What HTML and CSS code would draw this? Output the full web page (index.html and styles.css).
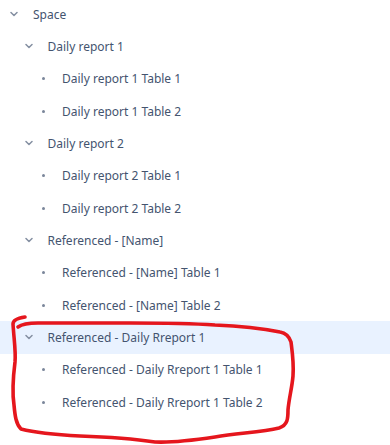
FILE: index.html
```html
<!DOCTYPE html>
<html lang="en">
<head>
<meta charset="UTF-8">
<title>Space tree</title>
<link rel="stylesheet" href="styles.css">
</head>
<body>

<!-- TREE -->
<ul class="tree">
 <li class="row lvl0"><span class="icon chev"><svg width="8" height="6" viewBox="0 0 8 6"><path d="M1 1.5 L4 4.5 L7 1.5" /></svg></span><span class="label">Space</span></li>

 <li class="row lvl1"><span class="icon chev"><svg width="8" height="6" viewBox="0 0 8 6"><path d="M1 1.5 L4 4.5 L7 1.5" /></svg></span><span class="label">Daily report 1</span></li>
 <li class="row lvl2"><span class="icon"><i class="dot"></i></span><span class="label">Daily report 1 Table 1</span></li>
 <li class="row lvl2"><span class="icon"><i class="dot"></i></span><span class="label">Daily report 1 Table 2</span></li>

 <li class="row lvl1"><span class="icon chev"><svg width="8" height="6" viewBox="0 0 8 6"><path d="M1 1.5 L4 4.5 L7 1.5" /></svg></span><span class="label">Daily report 2</span></li>
 <li class="row lvl2"><span class="icon"><i class="dot"></i></span><span class="label">Daily report 2 Table 1</span></li>
 <li class="row lvl2"><span class="icon"><i class="dot"></i></span><span class="label">Daily report 2 Table 2</span></li>

 <li class="row lvl1"><span class="icon chev"><svg width="8" height="6" viewBox="0 0 8 6"><path d="M1 1.5 L4 4.5 L7 1.5" /></svg></span><span class="label">Referenced - [Name]</span></li>
 <li class="row lvl2"><span class="icon"><i class="dot"></i></span><span class="label">Referenced - [Name] Table 1</span></li>
 <li class="row lvl2"><span class="icon"><i class="dot"></i></span><span class="label">Referenced - [Name] Table 2</span></li>

 <li class="row lvl1 selected"><span class="icon chev"><svg width="8" height="6" viewBox="0 0 8 6"><path d="M1 1.5 L4 4.5 L7 1.5" /></svg></span><span class="label">Referenced - Daily Rreport 1</span></li>
 <li class="row lvl2"><span class="icon"><i class="dot"></i></span><span class="label">Referenced - Daily Rreport 1 Table 1</span></li>
 <li class="row lvl2"><span class="icon"><i class="dot"></i></span><span class="label">Referenced - Daily Rreport 1 Table 2</span></li>
</ul>

<!-- RED MARKER SCRIBBLE -->
<svg class="scribble" width="390" height="445" viewBox="0 0 390 445">
 <path d="M25 317 C18 318 13 320 13 324 C14 340 16 352 15 362 C13 378 12 392 14 405 C15 416 16 424 21 429 C40 434 60 435 80 436 C110 437 135 439 155 442 C175 443 195 440 215 437 C240 433 262 432 279 428 C288 425 288 418 288 410 C289 398 292 388 293 376 C294 362 292 350 291 342 C289 336 286 333 280 332 C260 328 240 326 215 325 C185 323 160 323 130 323 C95 323 60 323 38 323 C30 323 22 324 18 327" />
</svg>

</body>
</html>
```

FILE: styles.css
```css
body{
 margin:0;
 background:#fff;
 font-family:"Noto Sans", "Open Sans", Arial, sans-serif;
 overflow:hidden;
}

/* TREE */
.tree{
 list-style:none;
 margin:-2px 0 0 0;
 padding:0;
}

.row{
 display:flex;
 align-items:center;
 height:32.33px;
 font-size:12px;
 color:#44546f;
}

.lvl0{padding-left:6px;}
.lvl1{padding-left:20.5px;}
.lvl2{padding-left:35px;}

.row.selected{
 background:#e9f2ff;
}

.icon{
 width:16px;
 height:16px;
 margin-right:11px;
 display:flex;
 align-items:center;
 justify-content:center;
 flex-shrink:0;
}

.chev svg path{
 fill:none;
 stroke:#8590a2;
 stroke-width:1.5;
 stroke-linecap:round;
 stroke-linejoin:round;
}

.dot{
 display:block;
 width:3px;
 height:3px;
 border-radius:50%;
 background:#7a869a;
}

.label{
 white-space:nowrap;
}

/* RED MARKER */
.scribble{
 position:absolute;
 top:0;
 left:0;
 pointer-events:none;
}
.scribble path{
 fill:none;
 stroke:#e5161d;
 stroke-width:3.6;
 stroke-linecap:round;
 stroke-linejoin:round;
}
```
